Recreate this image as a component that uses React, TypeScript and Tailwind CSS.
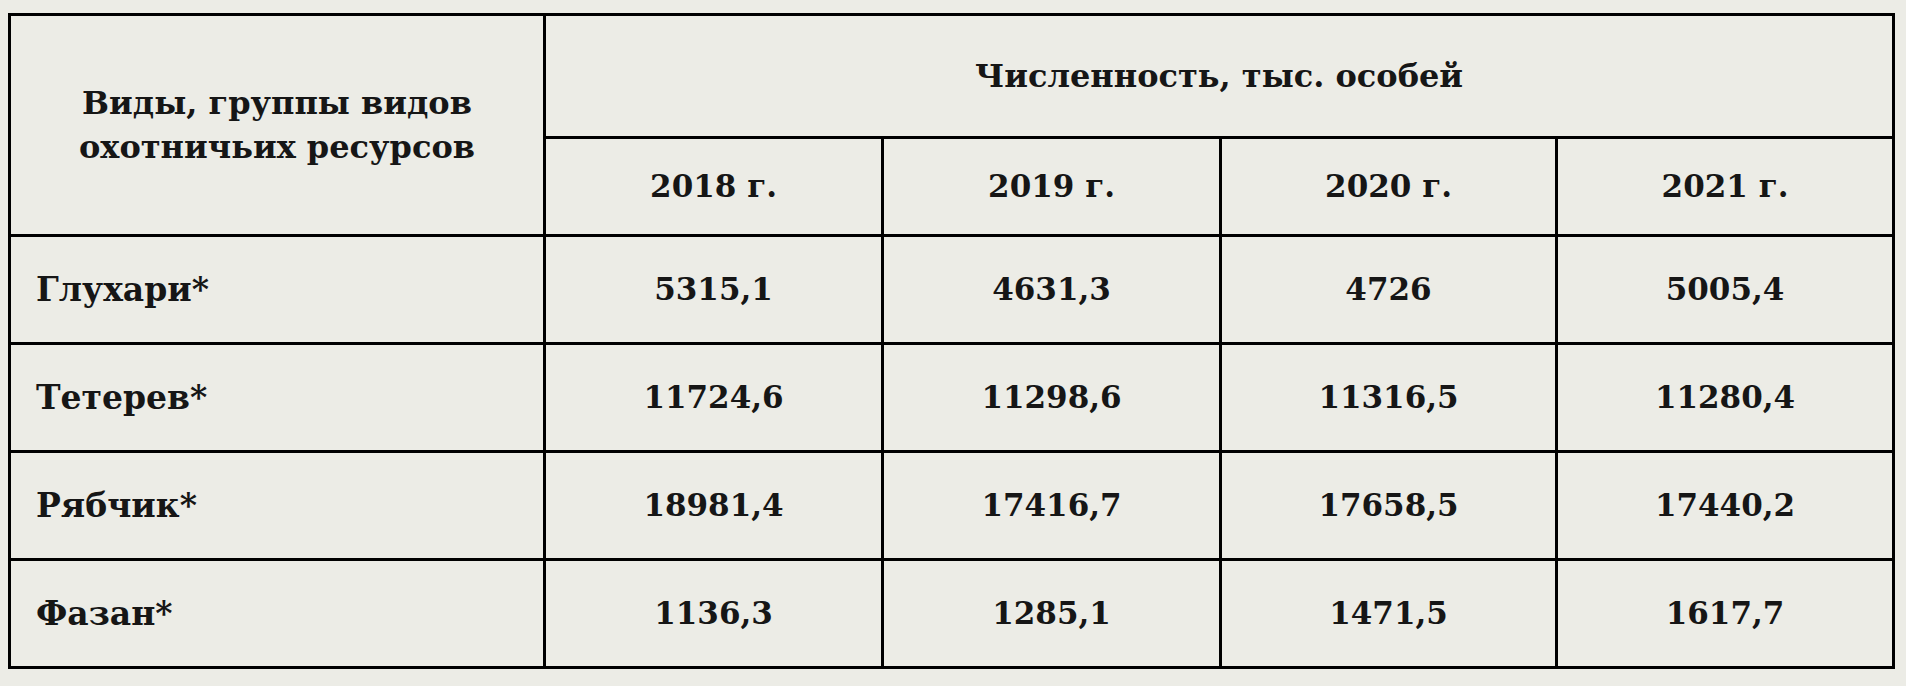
const years = ["2018 г.", "2019 г.", "2020 г.", "2021 г."];

const rows: { name: string; values: string[] }[] = [
  { name: "Глухари*", values: ["5315,1", "4631,3", "4726", "5005,4"] },
  { name: "Тетерев*", values: ["11724,6", "11298,6", "11316,5", "11280,4"] },
  { name: "Рябчик*", values: ["18981,4", "17416,7", "17658,5", "17440,2"] },
  { name: "Фазан*", values: ["1136,3", "1285,1", "1471,5", "1617,7"] },
];

export default function App() {
  return (
    <div className="w-[1906px] h-[686px] bg-[#ecece6] pt-[13px] pl-[8px] font-['DejaVu_Serif',serif] font-bold text-[#161616]">
      <table className="border-collapse border-[3px] border-black table-fixed w-[1884px]">
        <colgroup>
          <col className="w-[535px]" />
          <col className="w-[338px]" />
          <col className="w-[338px]" />
          <col className="w-[336px]" />
          <col className="w-[337px]" />
        </colgroup>
        <thead>
          <tr className="h-[123px]">
            <th
              rowSpan={2}
              className="border-[3px] border-black text-[32px] leading-[44px] font-bold text-center align-middle"
            >
              Виды, группы видов
              <br />
              охотничьих ресурсов
            </th>
            <th colSpan={4} className="border-[3px] border-black text-[32px] font-bold text-center align-middle">
              Численность, тыс. особей
            </th>
          </tr>
          <tr className="h-[98px]">
            {years.map((y) => (
              <th key={y} className="border-[3px] border-black text-[31px] font-bold text-center align-middle">
                {y}
              </th>
            ))}
          </tr>
        </thead>
        <tbody>
          {rows.map((r) => (
            <tr key={r.name} className="h-[108px]">
              <td className="border-[3px] border-black text-[33px] pl-[25px] align-middle">{r.name}</td>
              {r.values.map((v, i) => (
                <td key={i} className="border-[3px] border-black text-[31px] text-center align-middle">
                  {v}
                </td>
              ))}
            </tr>
          ))}
        </tbody>
      </table>
    </div>
  );
}
